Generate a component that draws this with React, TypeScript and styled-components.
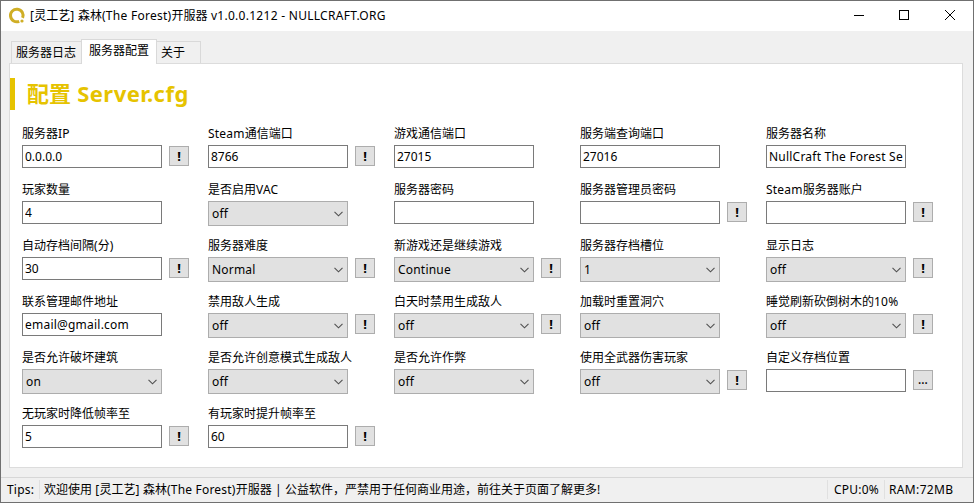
import React from "react";
import styled, { createGlobalStyle } from "styled-components";

const GlobalStyle = createGlobalStyle`
  * { box-sizing: border-box; }
  body {
    margin: 0;
    overflow: hidden;
    color: #000;
    font-family: "Noto Sans", "Noto Sans CJK SC", sans-serif;
    font-size: 12px;
  }
`;

const Window = styled.div`
  width: 974px;
  height: 503px;
  display: flex;
  flex-direction: column;
  background: #f0f0f0;
  border: 1px solid #707070;
`;

const TitleBar = styled.header`
  height: 30px;
  flex: none;
  display: flex;
  align-items: center;
  padding-left: 7px;
  background: #fff;
`;

const Title = styled.h1`
  flex: 1;
  margin: 0 0 0 4px;
  font-size: 12px;
  font-weight: 400;
  line-height: 30px;
  height: 30px;
  white-space: pre;
`;

/* Latin runs are set slightly wider than the surrounding Chinese text. */
const Latin = styled.span<{ $spacing: number }>`
  letter-spacing: ${(p) => p.$spacing}px;
`;

const CaptionButton = styled.button<{ $inset?: number }>`
  width: 46px;
  height: 30px;
  padding: 0 0 2px ${(p) => p.$inset ?? 0}px;
  border: 0;
  background: transparent;
  display: flex;
  align-items: center;
  justify-content: center;
`;

const Tabs = styled.nav`
  height: 33px;
  flex: none;
  display: flex;
  align-items: flex-end;
  padding-left: 10px;
`;

const Tab = styled.div<{ $active?: boolean; $width: number; $side?: "first" | "last" }>`
  width: ${(p) => p.$width}px;
  height: ${(p) => (p.$active ? 25 : 23)}px;
  padding-left: ${(p) => (p.$active ? 7 : 4)}px;
  line-height: 22px;
  border: 1px solid #d9d9d9;
  border-bottom: 0;
  border-left-width: ${(p) => (p.$side === "last" ? 0 : 1)}px;
  border-right-width: ${(p) => (p.$side === "first" ? 0 : 1)}px;
  background: ${(p) => (p.$active ? "#fff" : "#f0f0f0")};
  z-index: ${(p) => (p.$active ? 1 : "auto")};
  white-space: nowrap;
`;

const Panel = styled.main`
  height: 405px;
  flex: none;
  margin: -1px 10px 0 8px;
  border: 1px solid #dcdcdc;
  background: #fff;
  padding-top: 14px;
`;

const Heading = styled.h2`
  height: 32px;
  margin: 0;
  padding-left: 12px;
  border-left: 5px solid #e6c300;
  color: #e6c300;
  font-size: 22px;
  font-weight: 700;
  line-height: 30px;
  white-space: pre;
`;

const Form = styled.form`
  display: grid;
  grid-template-columns: repeat(5, 186px);
  grid-auto-rows: 56px;
  margin: 15px 0 0 12px;
`;

const Field = styled.div`
  display: grid;
  grid-template-columns: 140px 20px;
  grid-template-rows: 20px 25px;
  column-gap: 7px;
  align-items: start;
`;

const Label = styled.label`
  grid-column: 1 / -1;
  line-height: 17px;
  white-space: nowrap;
`;

const TextBox = styled.input<{ $spacing: number }>`
  width: 140px;
  height: 23px;
  padding: 0 2px;
  border: 1px solid #7a7a7a;
  border-radius: 0;
  background: #fff;
  color: #000;
  font: inherit;
  letter-spacing: ${(p) => p.$spacing}px;
  outline: 0;
`;

const ComboBox = styled.div`
  height: 25px;
  display: flex;
  align-items: center;
  justify-content: space-between;
  padding: 0 4px 0 3px;
  border: 1px solid #adadad;
  background: #e1e1e1;
  line-height: 23px;
`;

const HelpButton = styled.button`
  width: 20px;
  height: 20px;
  margin-top: 1px;
  padding: 0;
  border: 1px solid #adadad;
  background: #e1e1e1;
  color: #000;
  font: 700 13px/18px "Noto Sans", sans-serif;
`;

const BrowseButton = styled(HelpButton)`
  font-weight: 500;
  font-size: 12px;
`;

const StatusBar = styled.footer`
  height: 25px;
  flex: none;
  display: flex;
  margin-top: 9px;
  padding-top: 2px;
  border-top: 1px solid #d7d7d7;
`;

const StatusCell = styled.div<{ $width: number; $pad: number }>`
  width: ${(p) => p.$width}px;
  height: 19px;
  padding-left: ${(p) => p.$pad}px;
  line-height: 20px;
  white-space: pre;
  & + & {
    border-left: 1px solid #e0e0e0;
  }
`;

type Kind = "text" | "select";
type FieldSpec = [label: string, kind: Kind, value: string, button?: string];

const fields: FieldSpec[] = [
  ["服务器IP", "text", "0.0.0.0", "!"],
  ["Steam通信端口", "text", "8766", "!"],
  ["游戏通信端口", "text", "27015"],
  ["服务端查询端口", "text", "27016"],
  ["服务器名称", "text", "NullCraft The Forest Server"],
  ["玩家数量", "text", "4"],
  ["是否启用VAC", "select", "off"],
  ["服务器密码", "text", ""],
  ["服务器管理员密码", "text", "", "!"],
  ["Steam服务器账户", "text", "", "!"],
  ["自动存档间隔(分)", "text", "30", "!"],
  ["服务器难度", "select", "Normal", "!"],
  ["新游戏还是继续游戏", "select", "Continue", "!"],
  ["服务器存档槽位", "select", "1"],
  ["显示日志", "select", "off", "!"],
  ["联系管理邮件地址", "text", "email@gmail.com"],
  ["禁用敌人生成", "select", "off", "!"],
  ["白天时禁用生成敌人", "select", "off", "!"],
  ["加载时重置洞穴", "select", "off"],
  ["睡觉刷新砍倒树木的10%", "select", "off", "!"],
  ["是否允许破坏建筑", "select", "on"],
  ["是否允许创意模式生成敌人", "select", "off"],
  ["是否允许作弊", "select", "off"],
  ["使用全武器伤害玩家", "select", "off", "!"],
  ["自定义存档位置", "text", "", "..."],
  ["无玩家时降低帧率至", "text", "5", "!"],
  ["有玩家时提升帧率至", "text", "60", "!"],
];

/* Splits a mixed string into Chinese and Latin runs. */
const Mixed = ({ text, spacing = 0.2 }: { text: string; spacing?: number }) => (
  <>
    {text.split(/([\x20-\x7e]+)/).map((run, i) =>
      i % 2 ? (
        <Latin key={i} $spacing={spacing}>{run}</Latin>
      ) : (
        run
      ),
    )}
  </>
);

const Logo = () => (
  <svg width="18" height="18" viewBox="0 0 18 18" fill="none">
    <path d="M11.2 14.3A6.3 6.3 0 1 1 14.6 10.9" stroke="#cfae25" strokeWidth="3" />
    <circle cx="14" cy="14" r="1.6" fill="#cfae25" />
  </svg>
);

const Chevron = () => (
  <svg width="9" height="6" viewBox="0 0 9 6" fill="none">
    <path d="M0.5 0.8 4.5 4.8 8.5 0.8" stroke="#505050" strokeWidth="1.1" />
  </svg>
);

export default function App() {
  return (
    <>
      <GlobalStyle />
      <Window>
        <TitleBar>
          <Logo />
          <Title>
            <Mixed text="[灵工艺] 森林(The Forest)开服器 v1.0.0.1212 - NULLCRAFT.ORG" spacing={0.28} />
          </Title>
          <CaptionButton aria-label="最小化" $inset={2}>
            <svg width="10" height="10"><path d="M0 5.5H10" stroke="#000" /></svg>
          </CaptionButton>
          <CaptionButton aria-label="最大化">
            <svg width="10" height="10"><rect x=".5" y=".5" width="9" height="9" fill="none" stroke="#000" /></svg>
          </CaptionButton>
          <CaptionButton aria-label="关闭">
            <svg width="10" height="10"><path d="M0 0 10 10M10 0 0 10" stroke="#000" /></svg>
          </CaptionButton>
        </TitleBar>
        <Tabs>
          <Tab $width={70} $side="first">服务器日志</Tab>
          <Tab $width={76} $active>服务器配置</Tab>
          <Tab $width={44} $side="last">关于</Tab>
        </Tabs>
        <Panel>
          <Heading><Mixed text="配置 Server.cfg" spacing={0.45} /></Heading>
          <Form>
            {fields.map(([label, kind, value, button]) => (
              <Field key={label}>
                <Label><Mixed text={label} /></Label>
                {kind === "text" ? (
                  <TextBox defaultValue={value} $spacing={/[a-z]/.test(value) ? 0.22 : 0} />
                ) : (
                  <ComboBox>
                    <span><Mixed text={value} /></span>
                    <Chevron />
                  </ComboBox>
                )}
                {button === "!" && <HelpButton type="button">!</HelpButton>}
                {button === "..." && <BrowseButton type="button">...</BrowseButton>}
              </Field>
            ))}
          </Form>
        </Panel>
        <StatusBar>
          <StatusCell $width={38} $pad={6}><Mixed text="Tips:" /></StatusCell>
          <StatusCell $width={788} $pad={4}>
            <Mixed text="欢迎使用 [灵工艺] 森林(The Forest)开服器 | 公益软件，严禁用于任何商业用途，前往关于页面了解更多!" />
          </StatusCell>
          <StatusCell $width={57} $pad={6}><Mixed text="CPU:0%" /></StatusCell>
          <StatusCell $width={80} $pad={4}><Mixed text="RAM:72MB" spacing={0.35} /></StatusCell>
        </StatusBar>
      </Window>
    </>
  );
}
